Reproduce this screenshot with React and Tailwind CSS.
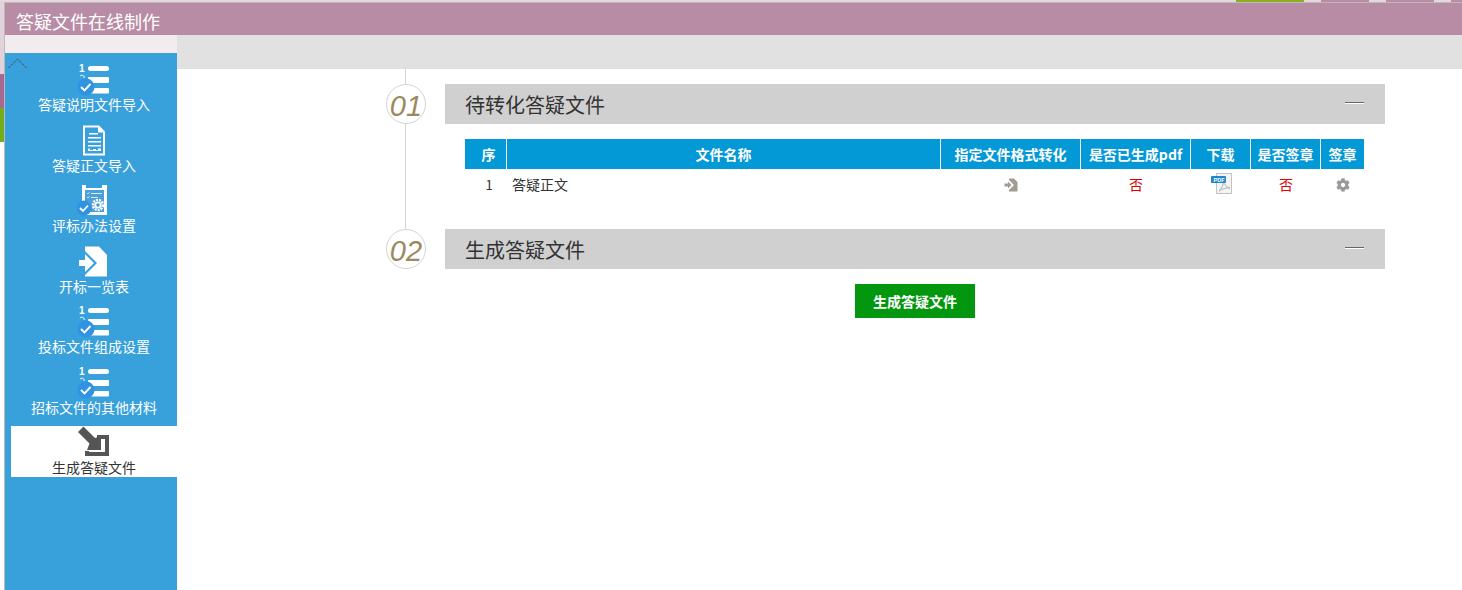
import React from "react";
import { FaCog } from "react-icons/fa";

const BLUE = "#38a1db";

function ListCheckIcon() {
  return (
    <svg width="34" height="33" viewBox="0 0 34 33">
      <text x="2" y="9" fill="#fff" fontSize="10" fontWeight="700" fontFamily="Liberation Sans, sans-serif">1</text>
      <rect x="11" y="3" width="21" height="5" rx="2.5" fill="#fff" />
      <rect x="11" y="14" width="21" height="6" rx="1" fill="#fff" />
      <rect x="11" y="25" width="21" height="5.5" rx="1" fill="#fff" />
      <path d="M3 13 C5 11.5 8 12.5 7 15" fill="none" stroke="#fff" strokeWidth="1" />
      <circle cx="9" cy="24" r="8.5" fill="#2f93e2" />
      <path d="M4 24 L7.5 27.5 L13.5 21" fill="none" stroke="#fff" strokeWidth="1.9" />
    </svg>
  );
}

function DocIcon() {
  return (
    <svg width="34" height="33" viewBox="0 0 34 33">
      <path d="M6 1.5 H22 L28 7.5 V31.5 H6 Z" fill="#fff" />
      <path d="M8 3.5 H21 V8.5 H26 V29.5 H8 Z" fill={BLUE} />
      <rect x="12" y="9" width="9" height="1.5" fill="#fff" />
      <rect x="11" y="13" width="13" height="1.5" fill="#fff" />
      <rect x="11" y="17" width="13" height="1.5" fill="#fff" />
      <rect x="11" y="21" width="13" height="1.5" fill="#fff" />
      <path d="M11 27 V24.5 H13 V26 H16 V25 H19 V26 H21 V24.5 H24 V27 Z" fill="#fff" />
    </svg>
  );
}

function ClipboardIcon() {
  return (
    <svg width="34" height="33" viewBox="0 0 34 33">
      <path d="M5 1 H9 V4 H25 V1 H30 V31 H5 Z" fill="#fff" />
      <rect x="8" y="6" width="19" height="22" fill="#4d9fd8" />
      <rect x="14" y="9" width="11" height="1" fill="#d5eaf7" />
      <rect x="14" y="13" width="7" height="1" fill="#d5eaf7" />
      <path d="M10 9 L11 10 L12.5 8 M10 13 L11 14 L12.5 12" stroke="#d5eaf7" strokeWidth="0.8" fill="none" />
      <circle cx="21" cy="21" r="5" fill="none" stroke="#fff" strokeWidth="2.5" strokeDasharray="2 1" />
      <circle cx="21" cy="21" r="3.6" fill="#fff" />
      <circle cx="21" cy="21" r="1.8" fill="#38a1db" />
      <circle cx="7" cy="24" r="7.5" fill="#2f93e2" />
      <path d="M3 24 L6 27 L11 21.5" fill="none" stroke="#fff" strokeWidth="1.8" />
    </svg>
  );
}

function ImportIcon() {
  return (
    <svg width="34" height="33" viewBox="0 0 34 33">
      <path d="M8 1.5 H22 L30 10 V31.5 H8 V30 L20 18 L8 6 Z" fill="#fff" />
      <path d="M2 15 H8 V9 L17 18 L8 27 V21 H2 Z" fill="#fff" />
    </svg>
  );
}

function ExportIcon() {
  return (
    <svg width="34" height="33" viewBox="0 0 34 33">
      <path d="M1 6 L6.5 0.5 L18 12 L24 10 V24 H10 L12.5 17.5 Z" fill="#555" />
      <path d="M20 9 H32 V30 H8 V25 H12 V26 H28 V13 H20 Z" fill="#555" />
    </svg>
  );
}

function SignInIcon() {
  return (
    <svg width="14" height="14" viewBox="0 0 14 14">
      <path d="M5 0.5 H10 L13.5 4 V13.5 H5 V12 L10 7 L5 2 Z" fill="#a09c92" />
      <path d="M0.5 5.5 H4 V3.5 L7.5 7 L4 10.5 V8.5 H0.5 Z" fill="#a09c92" />
    </svg>
  );
}

function PdfIcon() {
  return (
    <svg width="21" height="21" viewBox="0 0 21 21">
      <path d="M5.5 0.5 H20.5 V20.5 H5.5 Z" fill="#f4f4f4" stroke="#c2c2c2" />
      <path d="M8 18 C12 14 13 9 12.5 7 C12 10 15 14 19 15 C15 14.5 11 16 8 18 Z" fill="none" stroke="#b0b0b0" strokeWidth="1" />
      <rect x="0" y="3" width="15" height="7" rx="1" fill="#1b87cf" />
      <text x="2.5" y="8.5" fill="#fff" fontSize="5.5" fontWeight="700" fontFamily="Liberation Sans, sans-serif">PDF</text>
    </svg>
  );
}

const menu = [
  { label: "答疑说明文件导入", icon: <ListCheckIcon /> },
  { label: "答疑正文导入", icon: <DocIcon /> },
  { label: "评标办法设置", icon: <ClipboardIcon /> },
  { label: "开标一览表", icon: <ImportIcon /> },
  { label: "投标文件组成设置", icon: <ListCheckIcon /> },
  { label: "招标文件的其他材料", icon: <ListCheckIcon /> },
  { label: "生成答疑文件", icon: <ExportIcon />, active: true },
];

function SectionBar({ title }) {
  return (
    <div className="flex h-10 items-center justify-between bg-[#d0d0d0] pl-5 pr-[21px]">
      <span className="pt-[2px] text-[20px] leading-[38px] text-[#333]">{title}</span>
      <span className="mb-[2px] h-[2px] w-[19px] border-t border-b border-t-[#666] border-b-white" />
    </div>
  );
}

function Badge({ text }) {
  return (
    <div className="flex h-10 w-10 shrink-0 items-center justify-center rounded-full border border-[#d4d4d4] bg-white pt-[5px] font-['Liberation_Sans',sans-serif] text-[29px] italic text-[#9b8a5f]">
      {text}
    </div>
  );
}

export default function App() {
  return (
    <div className="flex h-[590px] flex-col overflow-hidden bg-white font-['Noto_Sans_CJK_SC','Liberation_Sans',sans-serif]">
      <div className="flex h-[2px] shrink-0 bg-[#e6d6dd] pl-[1236px]">
        <div className="w-[68px] bg-[#8fae1f]" />
        <div className="ml-[17px] w-[48px] bg-[#b98ca6]" />
        <div className="ml-[17px] w-[48px] bg-[#b98ca6]" />
        <div className="ml-[17px] w-[11px] bg-[#b98ca6]" />
      </div>

      <div className="flex min-h-0 flex-1">
        <div className="flex w-1 shrink-0 flex-col">
          <div className="h-[72px] bg-[#e2d3da]" />
          <div className="h-[34px] bg-[#a8688f]" />
          <div className="h-[34px] bg-[#73ad1c]" />
        </div>

        <div className="flex min-w-0 flex-1 flex-col border-t border-l border-[#bbbbbb]">
          <div className="h-8 shrink-0 bg-[#b98ca6] pl-[11px] text-[18px] leading-[36px] text-white">
            答疑文件在线制作
          </div>

          <div className="flex min-h-0 flex-1">
            <aside className="flex w-[172px] shrink-0 flex-col bg-[#f3ecef]">
              <div className="h-[18px] shrink-0" />
              <div className="relative flex-1 bg-[#38a1db] pt-[10px] pl-[6px]">
                <ul className="flex flex-col gap-[9.5px]">
                  {menu.map((item) => (
                    <li
                      key={item.label}
                      className={`flex h-[51px] flex-col items-center ${item.active ? "bg-white text-[#333]" : "text-white"}`}
                    >
                      <div className="flex h-[33px] items-center justify-center">{item.icon}</div>
                      <span className="whitespace-nowrap text-[14px] leading-4">{item.label}</span>
                    </li>
                  ))}
                </ul>
                <svg className="absolute top-[5px] left-[3px]" width="20" height="11" viewBox="0 0 20 11">
                  <path d="M0.5 10 L9.5 1 L18.5 10" fill="none" stroke="#444" strokeDasharray="1.4 0.8" />
                </svg>
              </div>
            </aside>

            <main className="flex min-w-0 flex-1 flex-col">
              <div className="h-[34px] shrink-0 bg-[#e1e1e1]" />

              <div className="flex flex-col pl-[209px]">
                <div className="flex h-[160px] gap-[19px]">
                  <div className="flex w-10 shrink-0 flex-col items-center">
                    <div className="mr-px h-[15px] w-px bg-[#d4d4d4]" />
                    <Badge text="01" />
                    <div className="mr-px w-px flex-1 bg-[#d4d4d4]" />
                  </div>
                  <div className="w-[940px] pt-[15px]">
                    <SectionBar title="待转化答疑文件" />
                    <table className="mt-[15px] ml-5 w-[899px] table-fixed border-separate border-spacing-0 text-[14px]">
                      <colgroup>
                        <col className="w-[42px]" />
                        <col className="w-[434px]" />
                        <col className="w-[140px]" />
                        <col className="w-[110px]" />
                        <col className="w-[60px]" />
                        <col className="w-[70px]" />
                        <col className="w-[43px]" />
                      </colgroup>
                      <thead>
                        <tr className="h-[30px] bg-[#0398d6] text-[14px] font-bold whitespace-nowrap text-white">
                          <th className="border-r border-white pl-[6px]">序</th>
                          <th className="border-r border-white">文件名称</th>
                          <th className="border-r border-white">指定文件格式转化</th>
                          <th className="border-r border-white">是否已生成pdf</th>
                          <th className="border-r border-white">下载</th>
                          <th className="border-r border-white">是否签章</th>
                          <th>签章</th>
                        </tr>
                      </thead>
                      <tbody>
                        <tr className="h-[31px] text-center text-[#333]">
                          <td className="pl-[6px] text-[13px]">1</td>
                          <td className="pl-[5px] text-left">答疑正文</td>
                          <td>
                            <div className="flex justify-center"><SignInIcon /></div>
                          </td>
                          <td className="text-[#e00000]">否</td>
                          <td>
                            <div className="mb-[2px] flex justify-center"><PdfIcon /></div>
                          </td>
                          <td className="text-[#e00000]">否</td>
                          <td>
                            <div className="flex justify-center"><FaCog className="text-[14px] text-[#999]" /></div>
                          </td>
                        </tr>
                      </tbody>
                    </table>
                  </div>
                </div>

                <div className="flex gap-[19px]">
                  <Badge text="02" />
                  <div className="w-[940px]">
                    <SectionBar title="生成答疑文件" />
                    <div className="mt-[15px] flex justify-center">
                      <button className="h-[34px] w-[120px] bg-[#03960f] text-[14px] font-bold text-white">
                        生成答疑文件
                      </button>
                    </div>
                  </div>
                </div>
              </div>
            </main>
          </div>
        </div>
      </div>
    </div>
  );
}
